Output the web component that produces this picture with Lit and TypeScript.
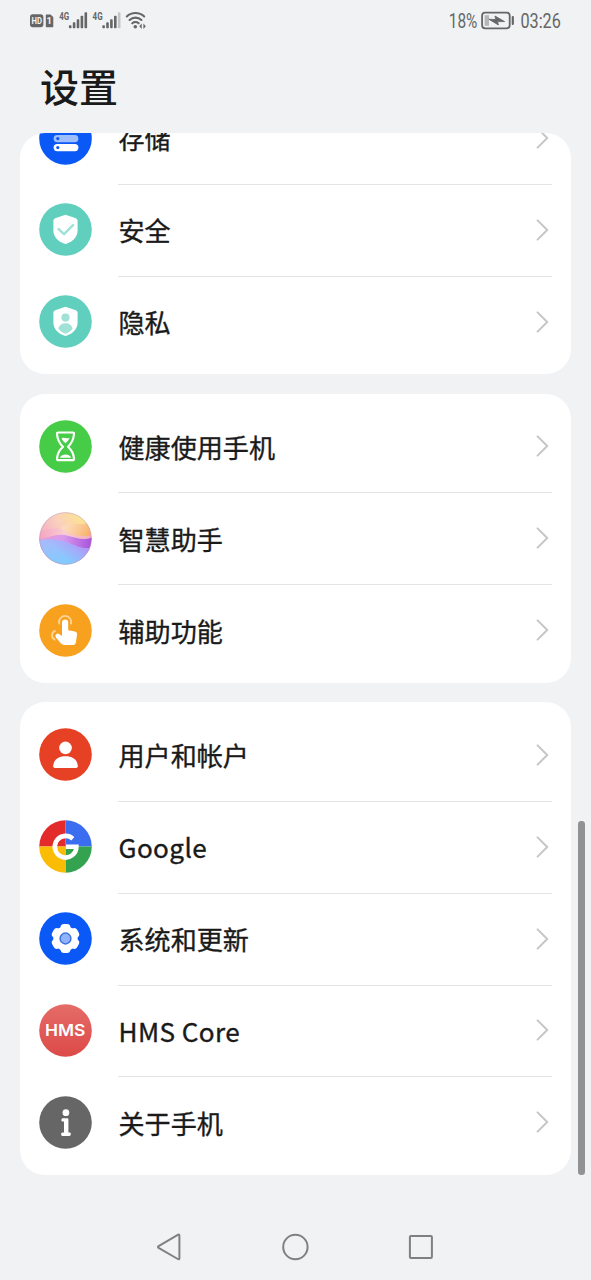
import { LitElement, html, svg, css } from "lit";
import { customElement, property } from "lit/decorators.js";

type IconName =
  | "storage" | "security" | "privacy" | "balance" | "assistant" | "access"
  | "users" | "google" | "system" | "hms" | "about";

// Every glyph is drawn in a 53 x 53 box around a full-size disc.
const disc = (fill: string) => svg`<circle cx="26.5" cy="26.5" r="26.3" fill=${fill} />`;

const shield = svg`<path fill="#fff" d="M26.5 11.8Q27 11.8 28 12.3L36.8 15.3Q38.6 16 38.6 17.8V27.2C38.6 34 34.2 38 28 40.6Q26.5 41.2 25 40.6C18.8 38 14.4 34 14.4 27.2V17.8Q14.4 16 16.2 15.3L25 12.3Q26 11.8 26.5 11.8Z"/>`;

const icons: Record<IconName, unknown> = {
  storage: svg`${disc("#0a59f7")}
    <rect x="14.6" y="13.8" width="24.8" height="7.2" rx="3.6" fill="#fff"/>
    <rect x="14.6" y="22.9" width="24.8" height="7.3" rx="3.6" fill="#9dbdfc"/>
    <rect x="14.6" y="32" width="24.8" height="7.2" rx="3.6" fill="#fff"/>
    <circle cx="18.8" cy="26.6" r="1.6" fill="#0a59f7"/>
    <circle cx="18.8" cy="35.6" r="1.6" fill="#0a59f7"/>`,
  security: svg`${disc("#61cfbe")}${shield}
    <path d="M19.6 26.2L25 31.2L34 22.2" fill="none" stroke="#a0e2d8" stroke-width="2.5" stroke-linecap="round" stroke-linejoin="round"/>`,
  privacy: svg`${disc("#61cfbe")}${shield}
    <circle cx="26.5" cy="22.6" r="4.1" fill="#a0e2d8"/>
    <path d="M19.3 33.2C21 29.4 23.6 28.2 26.5 28.2S32 29.4 33.7 33.2C32 36 29.6 37.6 26.5 38.7C23.4 37.6 21 36 19.3 33.2Z" fill="#a0e2d8"/>`,
  balance: svg`${disc("#47cc47")}
    <path d="M19.4 12.5H33.6Q35.2 12.5 35 14C34.5 20 32.6 23.4 29 26.7C32.6 30 34.5 33 35 38.4Q35.2 40.2 33.6 40.2H19.4Q17.8 40.2 18 38.4C18.5 33 20.4 30 24 26.7C20.4 23.4 18.5 20 18 14Q17.8 12.5 19.4 12.5Z" fill="none" stroke="#fff" stroke-width="2.2" stroke-linejoin="round"/>
    <path d="M22.6 18.4C25 16.8 27 19.4 30.6 17.8C29.8 20 28.4 21.6 26.5 23.2C24.6 21.6 23.3 20 22.6 18.4Z" fill="#fff"/>
    <path d="M20.8 37.8C22 35.8 24 34.6 26.5 34.6S31 35.8 32.2 37.8Z" fill="#fff"/>`,
  assistant: svg`
    <defs>
      <clipPath id="orb"><circle cx="26.5" cy="26.5" r="26"/></clipPath>
      <linearGradient id="sky" x1="0" y1=".5" x2=".8" y2="0"><stop offset="0" stop-color="#f2a9c4"/><stop offset=".5" stop-color="#fad0bd"/><stop offset="1" stop-color="#fde58a"/></linearGradient>
      <linearGradient id="sun" x1="0" y1="0" x2="1" y2=".3"><stop offset="0" stop-color="#fde6cf" stop-opacity=".6"/><stop offset="1" stop-color="#f9b06a"/></linearGradient>
      <linearGradient id="rose" x1="0" y1="0" x2="1" y2="0"><stop offset="0" stop-color="#f5a3c2"/><stop offset=".5" stop-color="#f9cdd0"/><stop offset="1" stop-color="#f3a9b8"/></linearGradient>
      <linearGradient id="violet" x1="0" y1="0" x2="1" y2="0"><stop offset="0" stop-color="#ef9ccf"/><stop offset=".45" stop-color="#d99aec"/><stop offset="1" stop-color="#a44fdc"/></linearGradient>
      <linearGradient id="sea" x1=".3" y1="0" x2=".5" y2="1"><stop offset="0" stop-color="#a8bafb"/><stop offset="1" stop-color="#7ccdfe"/></linearGradient>
      <linearGradient id="deep" x1=".45" y1=".6" x2="1" y2=".3"><stop offset="0" stop-color="#b794f8" stop-opacity="0"/><stop offset="1" stop-color="#b78af6"/></linearGradient>
    </defs>
    <g clip-path="url(#orb)">
      <rect width="53" height="53" fill="url(#sky)"/>
      <path d="M22 16C29 10 36 12 42 12S50 10 54 13V27H26Z" fill="url(#sun)"/>
      <path d="M-1 22C8 16 18 15 24 18S36 24 43 24S51 23 54 21V38H-1Z" fill="url(#rose)"/>
      <path d="M-1 27C10 26 18 21 28 23.5S44 29 54 25V40H-1Z" fill="url(#violet)"/>
      <path d="M-1 28.5C8 26.5 20 26.5 30 31S44 37 54 36V54H-1Z" fill="url(#sea)"/>
      <path d="M-1 28.5C8 26.5 20 26.5 30 31S44 37 54 36V54H-1Z" fill="url(#deep)"/>
    </g>
    <circle cx="26.5" cy="26.5" r="25.9" fill="none" stroke="#b98fb0" stroke-opacity=".6" stroke-width=".8"/>`,
  access: svg`${disc("#f8a11f")}
    <path d="M20.2 19.6A6.1 6.1 0 1 1 32 19.6M16 26.9A4.8 4.8 0 0 0 15.6 35.6" fill="none" stroke="#fcd699" stroke-width="1.8" stroke-linecap="round"/>
    <path d="M26.1 15.4Q29.2 15.4 29.2 18.6V26.2L36 27.4Q38.3 27.8 38.1 30.2L36.9 38.2Q36.4 41 33.6 41H25.3Q23.4 41 22 39.6L16.9 33.4Q15.6 31.4 17.4 30Q18.8 29.1 20.4 30.2L23 31.9V18.6Q23 15.4 26.1 15.4Z" fill="#fff"/>`,
  users: svg`${disc("#e64125")}
    <circle cx="26.5" cy="19.9" r="6.3" fill="#fff"/>
    <path d="M14.2 38C14.8 31.4 19.4 28.3 26.5 28.3S38.2 31.4 38.8 38Q38.9 39.9 37 39.9H16Q14.1 39.9 14.2 38Z" fill="#fff"/>`,
  google: svg`
    <path d="M26.5 26.5H.2A26.3 26.3 0 0 1 26.5 .2Z" fill="#e32b2b"/>
    <path d="M26.5 26.5V.2A26.3 26.3 0 0 1 52.8 26.5Z" fill="#3a6df0"/>
    <path d="M26.5 26.5H52.8A26.3 26.3 0 0 1 26.5 52.8Z" fill="#34a350"/>
    <path d="M26.5 26.5V52.8A26.3 26.3 0 0 1 .2 26.5Z" fill="#fbbc05"/>
    <path d="M33.8 18.7A10.8 10.8 0 1 0 37.4 26.8H27" fill="none" stroke="#fff" stroke-width="4.6"/>`,
  system: svg`${disc("#0a59f7")}
    <g fill="#fff">
      <circle cx="26.5" cy="26.5" r="12.2"/>
      ${[0, 60, 120].map((a) => svg`<rect x="21.5" y="12.1" width="10" height="28.8" rx="3.6" transform="rotate(${a} 26.5 26.5)"/>`)}
    </g>
    <circle cx="26.5" cy="26.5" r="5.4" fill="#8fb4fb" stroke="#3f73dd" stroke-width="1.5"/>`,
  hms: svg`
    <defs><linearGradient id="hms" x1="0" y1="0" x2="0" y2="1"><stop offset="0" stop-color="#e56c68"/><stop offset="1" stop-color="#dc4a48"/></linearGradient></defs>
    ${disc("url(#hms)")}
    <text x="6" y="32.3" class="hms" textLength="40.4" lengthAdjust="spacingAndGlyphs">HMS</text>`,
  about: svg`${disc("#666")}
    <circle cx="26.9" cy="16.7" r="3.4" fill="#fff"/>
    <path d="M23.4 22.3H28.4Q29.4 22.3 29.4 23.3V36.6H30.6Q31.9 36.6 31.9 38T30.6 39.9H23.4Q22.1 39.9 22.1 38.3T23.4 36.6H25V25.4H23.6Q22.4 25.4 22.4 23.9T23.4 22.3Z" fill="#fff"/>`,
};

@customElement("settings-row")
class SettingsRow extends LitElement {
  @property() icon: IconName = "about";
  @property() label = "";

  static styles = css`
    :host {
      display: flex;
      flex: none;
      align-items: center;
      height: 91.9px;
      padding: 0 19.5px 0 19px;
    }
    .icon { flex: none; width: 53px; height: 53px; }
    .body {
      display: flex;
      flex: 1;
      align-items: center;
      justify-content: space-between;
      height: 91.9px;
      margin: 0 0 -1px 26px;
      padding-right: 3px;
      border-bottom: 1px solid #e4e4e5;
    }
    :host(:last-child) .body { border-bottom-color: transparent; }
    .label {
      padding: 0.6px 0 0 0.5px;
      font-size: 26.1px;
      font-weight: 400;
      line-height: 38px;
      color: #1a1a1a;
      -webkit-text-stroke: 0.35px #1a1a1a;
      white-space: nowrap;
    }
    .label.latin { letter-spacing: 0.4px; }
    .chevron { width: 13px; height: 22px; }
    .hms { font: 600 15.5px Inter, sans-serif; fill: #fff; }
  `;

  render() {
    const latin = /^[\x20-\x7e]+$/.test(this.label);
    return html`
      <svg class="icon" viewBox="0 0 53 53">${icons[this.icon]}</svg>
      <div class="body">
        <span class="label ${latin ? "latin" : ""}">${this.label}</span>
        <svg class="chevron" viewBox="0 0 13 22">
          <path d="M1.6 1.4L11.2 11L1.6 20.6" fill="none" stroke="#c6c6c6" stroke-width="2" stroke-linecap="round" stroke-linejoin="round"/>
        </svg>
      </div>`;
  }
}

@customElement("status-bar")
class StatusBar extends LitElement {
  static styles = css`
    :host { display: block; height: 40px; }
    .bar { display: block; width: 591px; height: 40px; }
    .tiny { font: 700 10px Roboto, sans-serif; fill: #666; }
    .badge { font: 700 9.5px Roboto, sans-serif; fill: #f1f2f4; }
    .big { font: 400 19.5px Roboto, sans-serif; fill: #666; }
  `;

  render() {
    const bars = (x: number, last: string) =>
      [3, 6, 9, 12.5, 16].map((h, i) => svg`<rect x=${x + i * 3.9} y=${28.3 - h} width="2.6" height=${h} rx=".8" fill=${i === 4 ? last : "#666"}/>`);
    return html`
      <svg class="bar" viewBox="0 0 591 40">
        <rect x="30" y="14.3" width="13.4" height="13" rx="2.8" fill="#666"/>
        <text class="badge" x="31.5" y="24.2" textLength="10.4" lengthAdjust="spacingAndGlyphs">HD</text>
        <path d="M46.4 15H50.2L52.7 17.4V26.6H46.4Z" fill="#666" stroke="#666" stroke-width="1.2" stroke-linejoin="round"/>
        <text class="badge" x="46.6" y="24.4">1</text>
        <text class="tiny" x="59.2" y="19.6" textLength="10" lengthAdjust="spacingAndGlyphs">4G</text>
        ${bars(68.9, "#666")}
        <text class="tiny" x="92.6" y="19.6" textLength="10" lengthAdjust="spacingAndGlyphs">4G</text>
        ${bars(102.3, "#c4c5c6")}
        <g fill="none" stroke="#666" stroke-width="2.1" stroke-linecap="round">
          <path d="M126.8 16.5A12.6 12.6 0 0 1 144.2 16.5"/>
          <path d="M129.6 20A8.6 8.6 0 0 1 141.4 20"/>
          <path d="M132.3 23.3A4.8 4.8 0 0 1 138.7 23.3"/>
        </g>
        <circle cx="135.3" cy="26.8" r="1.8" fill="#666"/>
        <path d="M141.7 23.4V29L139.3 26.2ZM143.4 23.4V29L145.8 26.2Z" fill="#666"/>
        <text class="big" x="448.8" y="27.8" textLength="28.6" lengthAdjust="spacingAndGlyphs">18%</text>
        <rect x="482.1" y="12.7" width="27.6" height="15.6" rx="3" fill="none" stroke="#666" stroke-width="1.8"/>
        <rect x="484.6" y="15.2" width="4.4" height="10.6" fill="#b5b6b7"/>
        <rect x="511.7" y="16" width="2.2" height="9" rx="1" fill="#666"/>
        <path d="M488.8 19.2L495.6 19.6L495 16L504.6 21.6L497.6 21.6L498.4 25Z" fill="#666" stroke="#666" stroke-width=".8" stroke-linejoin="round"/>
        <text class="big" x="520.4" y="27.8" textLength="40.4" lengthAdjust="spacingAndGlyphs">03:26</text>
      </svg>`;
  }
}

const groups: [IconName, string][][] = [
  [["storage", "存储"], ["security", "安全"], ["privacy", "隐私"]],
  [["balance", "健康使用手机"], ["assistant", "智慧助手"], ["access", "辅助功能"]],
  [["users", "用户和帐户"], ["google", "Google"], ["system", "系统和更新"], ["hms", "HMS Core"], ["about", "关于手机"]],
];

@customElement("app-root")
class AppRoot extends LitElement {
  static styles = css`
    :host {
      display: flex;
      flex-direction: column;
      position: relative;
      box-sizing: border-box;
      width: 591px;
      height: 1280px;
      overflow: hidden;
      background: #f1f2f4;
      font-family: "Noto Sans CJK SC", sans-serif;
    }
    .title {
      height: 93px;
      margin: 0;
      padding-left: 40px;
      font-size: 39px;
      font-weight: 500;
      line-height: 91px;
      color: #1a1a1a;
    }
    .list {
      display: flex;
      flex: 1;
      flex-direction: column;
      gap: 19.7px;
      padding: 0 20px;
    }
    .card {
      display: flex;
      flex: none;
      flex-direction: column;
      padding: 6.5px 0;
      border-radius: 25px;
      background: #fff;
    }
    /* The first card is scrolled partly out of view; its rows hang from the bottom edge. */
    .card.scrolled {
      box-sizing: border-box;
      height: 241.3px;
      padding-top: 0;
      justify-content: flex-end;
      overflow: hidden;
    }
    .thumb {
      position: absolute;
      top: 821px;
      left: 578px;
      width: 6.5px;
      height: 354px;
      border-radius: 3.25px;
      background: #909294;
    }
    .nav { display: flex; flex: none; justify-content: center; gap: 98px; height: 66px; align-items: center; }
    .nav svg { width: 28px; height: 28px; fill: none; stroke: #808080; stroke-width: 2; stroke-linejoin: round; }
  `;

  render() {
    return html`
      <status-bar></status-bar>
      <h1 class="title">设置</h1>
      <main class="list">
        ${groups.map((rows, i) => html`
          <section class="card ${i === 0 ? "scrolled" : ""}">
            ${rows.map(([icon, label]) => html`<settings-row .icon=${icon} .label=${label}></settings-row>`)}
          </section>`)}
      </main>
      <div class="thumb"></div>
      <nav class="nav">
        <svg viewBox="0 0 28 28"><path d="M2.6 13.1L21.8 1.8Q23.4 1 23.4 2.9V25.1Q23.4 27 21.8 26L2.6 14.9Q1.4 14 2.6 13.1Z"/></svg>
        <svg viewBox="0 0 28 28"><circle cx="13.4" cy="14" r="12.2"/></svg>
        <svg viewBox="0 0 28 28"><rect x="1.9" y="3" width="22" height="22" rx="1"/></svg>
      </nav>`;
  }
}
